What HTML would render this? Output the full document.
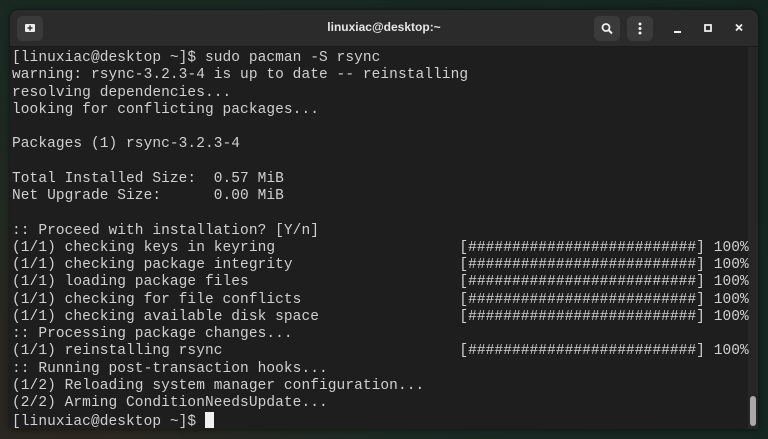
<!DOCTYPE html>
<html><head><style>
html,body{margin:0;padding:0;width:768px;height:439px;overflow:hidden;background:#1c2a24;}
body{background:radial-gradient(circle at 10% 90%,#2e2620 0,#1b2923 40%,#142520 100%);}
.win{position:absolute;left:10px;top:10px;width:748px;height:419px;background:#1e1e1e;border-radius:8px 8px 0 0;overflow:hidden;box-shadow:0 0 6px rgba(0,0,0,.6);}
.tb{position:absolute;left:0;top:0;width:748px;height:36px;background:#2b2b2b;border-bottom:1px solid #1a1a1a;}
.title{position:absolute;left:0;right:0;top:10px;text-align:center;color:#e6e6e6;font:bold 12px "Liberation Sans",sans-serif;}
.btn{position:absolute;top:6px;width:26px;height:25px;background:#3a3a3a;border-radius:5px;}
pre{position:absolute;left:2px;top:40px;margin:0;font:14.5px/17.25px "Liberation Mono",monospace;letter-spacing:0.07px;color:#d0d0d0;}
.cur{display:inline-block;width:9px;height:16px;background:#f0f0f0;vertical-align:-3px;}
.sb{position:absolute;right:2px;top:386px;width:6px;height:30px;background:#a8a8a8;border-radius:3px;}
.sbt{position:absolute;right:0;top:37px;width:10px;height:382px;background:#262626;}
</style></head><body>
<div class="win">
<div class="tb">
<div class="btn" style="left:7px"><svg width="26" height="25"><rect x="8" y="8" width="10" height="8" rx="1" fill="#eee"/><path d="M13 9.5v5M10.5 12h5" stroke="#333" stroke-width="1.5"/></svg></div>
<div class="title">linuxiac@desktop:~</div>
<div class="btn" style="left:584px"><svg width="26" height="25"><circle cx="12" cy="11.5" r="3.5" stroke="#eee" stroke-width="1.8" fill="none"/><path d="M14.5 14l3.5 3.5" stroke="#eee" stroke-width="2"/></svg></div>
<div class="btn" style="left:617px"><svg width="26" height="25"><circle cx="13" cy="8" r="1.5" fill="#eee"/><circle cx="13" cy="12.5" r="1.5" fill="#eee"/><circle cx="13" cy="17" r="1.5" fill="#eee"/></svg></div>
<svg style="position:absolute;left:660px;top:10px" width="80" height="16"><path d="M4 12h7" stroke="#eee" stroke-width="2"/><rect x="35" y="5" width="6" height="6" stroke="#eee" stroke-width="1.8" fill="none"/><path d="M66 4.5l6 6M72 4.5l-6 6" stroke="#eee" stroke-width="1.8"/></svg>
</div>
<div class="sbt"></div><div class="sb"></div>
<pre>[linuxiac@desktop ~]$ sudo pacman -S rsync
warning: rsync-3.2.3-4 is up to date -- reinstalling
resolving dependencies...
looking for conflicting packages...

Packages (1) rsync-3.2.3-4

Total Installed Size:  0.57 MiB
Net Upgrade Size:      0.00 MiB

:: Proceed with installation? [Y/n]
(1/1) checking keys in keyring                     [##########################] 100%
(1/1) checking package integrity                   [##########################] 100%
(1/1) loading package files                        [##########################] 100%
(1/1) checking for file conflicts                  [##########################] 100%
(1/1) checking available disk space                [##########################] 100%
:: Processing package changes...
(1/1) reinstalling rsync                           [##########################] 100%
:: Running post-transaction hooks...
(1/2) Reloading system manager configuration...
(2/2) Arming ConditionNeedsUpdate...
[linuxiac@desktop ~]$ <span class="cur"></span></pre>
</div>
</body></html>
